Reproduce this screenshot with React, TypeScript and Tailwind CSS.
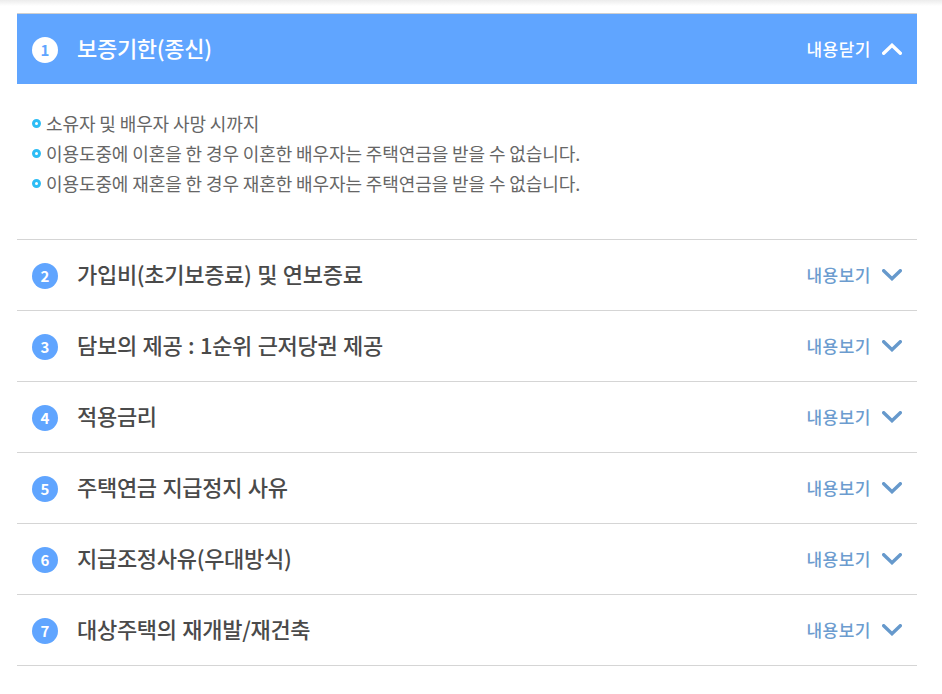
const items = [
  { n: 2, title: '가입비(초기보증료) 및 연보증료' },
  { n: 3, title: '담보의 제공 : 1순위 근저당권 제공' },
  { n: 4, title: '적용금리' },
  { n: 5, title: '주택연금 지급정지 사유' },
  { n: 6, title: '지급조정사유(우대방식)' },
  { n: 7, title: '대상주택의 재개발/재건축' },
]

const notes = [
  '소유자 및 배우자 사망 시까지',
  '이용도중에 이혼을 한 경우 이혼한 배우자는 주택연금을 받을 수 없습니다.',
  '이용도중에 재혼을 한 경우 재혼한 배우자는 주택연금을 받을 수 없습니다.',
]

function Chevron({ up, color }: { up?: boolean; color: string }) {
  return (
    <svg width="20" height="12" viewBox="0 0 20 12" fill="none" stroke={color} strokeWidth="3.4" strokeLinecap="round" strokeLinejoin="miter">
      <path d={up ? 'M1.7 10.3L10 2.3L18.3 10.3' : 'M1.7 1.7L10 9.7L18.3 1.7'} />
    </svg>
  )
}

export default function App() {
  return (
    <div className="h-[694px] overflow-hidden bg-white font-['Noto_Sans_CJK_KR','Noto_Sans',sans-serif]">
      <div className="h-[6px] bg-gradient-to-b from-[#ececec] to-white" />
      <div className="pl-[17px] pr-[25px] pt-[7px]">
        <div className="flex h-[71px] items-center border-t border-[#cfcfcf] bg-[#60a5ff] pl-[15px] pr-[15px] text-white">
          <span className="mt-[2px] flex h-[26px] w-[26px] items-center justify-center rounded-full bg-white text-[15px] font-bold text-[#60a5ff]">1</span>
          <span className="mb-[3px] ml-[19px] flex-1 text-[22px] font-medium tracking-[-0.3px] [word-spacing:1px]">보증기한(종신)</span>
          <span className="mb-[1px] mr-[11px] text-[17px] font-medium tracking-[0.5px]">내용닫기</span>
          <Chevron up color="#ffffff" />
        </div>
        <div className="h-[156px] border-b border-[#d5d5d5] pl-[15px] pt-[24px]">
          {notes.map((note) => (
            <div key={note} className="flex h-[30px] items-center text-[18px] tracking-[-0.1px] text-[#666666]">
              <span className="mr-[5px] h-[9px] w-[9px] shrink-0 rounded-full border-[3px] border-[#2dbdf5]" />
              {note}
            </div>
          ))}
        </div>
        {items.map((item) => (
          <div key={item.n} className="flex h-[71px] items-center border-b border-[#d5d5d5] pl-[15px] pr-[15px]">
            <span className="mt-[2px] flex h-[26px] w-[26px] items-center justify-center rounded-full bg-[#60a5ff] text-[15px] font-bold text-white">{item.n}</span>
            <span className="mb-[4px] ml-[19px] flex-1 text-[22px] font-medium tracking-[-0.3px] text-[#4a4a4a] [word-spacing:1px]">{item.title}</span>
            <span className="mb-[1px] mr-[11px] text-[17px] font-medium tracking-[0.5px] text-[#6c9ccf]">내용보기</span>
            <Chevron color="#6699cc" />
          </div>
        ))}
      </div>
    </div>
  )
}
